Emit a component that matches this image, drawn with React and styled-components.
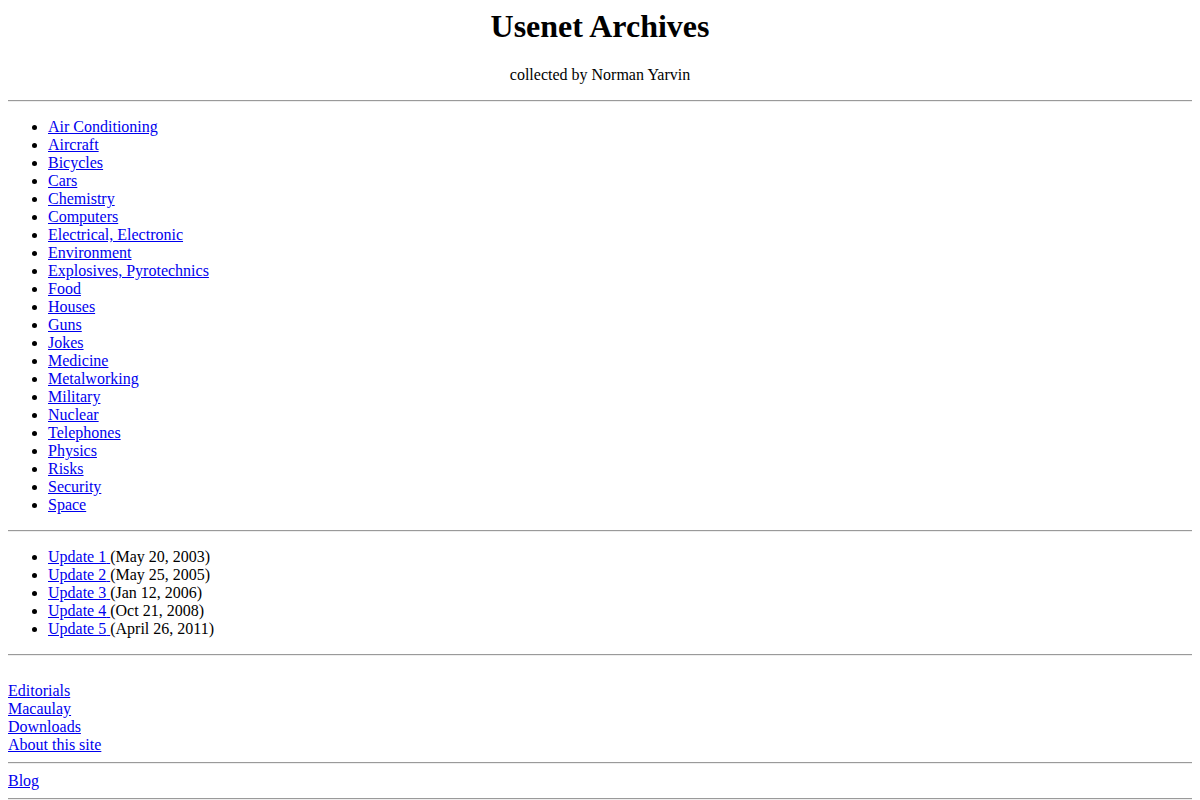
import React from "react";
import styled, { createGlobalStyle } from "styled-components";

const GlobalStyle = createGlobalStyle`
  body {
    margin: 8px;
    font-family: "Liberation Serif", "Times New Roman", serif;
    font-size: 16px;
    color: #000;
    background: #fff;
  }
`;

const Title = styled.h1`
  margin: 0 0 21px;
  font-size: 32px;
  font-weight: bold;
  text-align: center;
`;

const Byline = styled.p`
  margin: 21px 0 16px;
  text-align: center;
`;

const Rule = styled.hr`
  margin: 8px 0;
  border: none;
  border-top: 1px solid #9a9a9a;
  border-bottom: 1px solid #eeeeee;
  height: 0;
`;

const List = styled.ul`
  margin: 16px 0;
  padding-left: 40px;
  list-style: disc;
`;

const Link = styled.a`
  color: #0000ee;
  text-decoration: underline;
`;

const Links = styled.div`
  padding-top: 18px;
`;

const topics = [
  "Air Conditioning",
  "Aircraft",
  "Bicycles",
  "Cars",
  "Chemistry",
  "Computers",
  "Electrical, Electronic",
  "Environment",
  "Explosives, Pyrotechnics",
  "Food",
  "Houses",
  "Guns",
  "Jokes",
  "Medicine",
  "Metalworking",
  "Military",
  "Nuclear",
  "Telephones",
  "Physics",
  "Risks",
  "Security",
  "Space",
];

const updates = [
  ["Update 1", "May 20, 2003"],
  ["Update 2", "May 25, 2005"],
  ["Update 3", "Jan 12, 2006"],
  ["Update 4", "Oct 21, 2008"],
  ["Update 5", "April 26, 2011"],
];

const pages = ["Editorials", "Macaulay", "Downloads", "About this site"];

const App = () => {
  return (
    <>
      <GlobalStyle />
      <Title>Usenet Archives</Title>
      <Byline>collected by Norman Yarvin</Byline>
      <Rule />
      <List>
        {topics.map((t) => (
          <li key={t}>
            <Link href="#">{t}</Link>
          </li>
        ))}
      </List>
      <Rule />
      <List>
        {updates.map(([name, date]) => (
          <li key={name}>
            <Link href="#">{name} </Link>({date})
          </li>
        ))}
      </List>
      <Rule />
      <Links>
        {pages.map((p) => (
          <div key={p}>
            <Link href="#">{p}</Link>
          </div>
        ))}
      </Links>
      <Rule />
      <Link href="#">Blog</Link>
      <Rule />
    </>
  );
};

export default App;
